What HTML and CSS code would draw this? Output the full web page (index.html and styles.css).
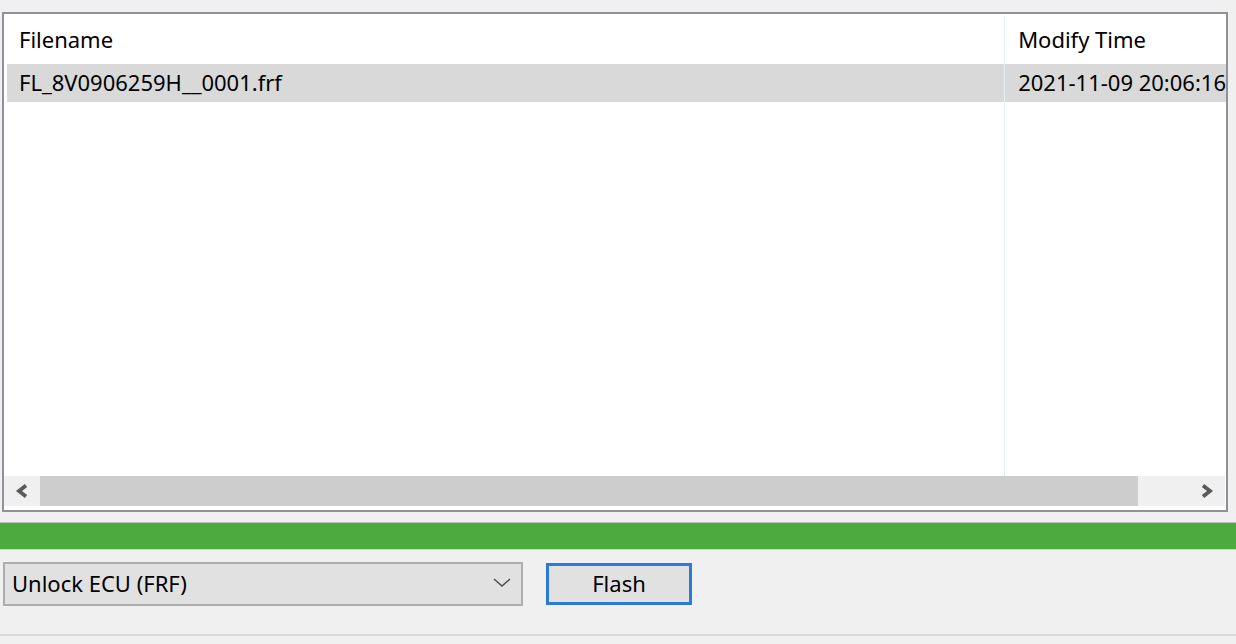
FILE: index.html
```html
<!DOCTYPE html>
<html>
<head>
<meta charset="utf-8">
<link rel="stylesheet" href="styles.css">
</head>
<body>
<div class="app">
  <div class="listview">
    <div class="lv-body">
      <div class="lv-cols">
        <div class="col col-name">
          <div class="hdr">Filename</div>
          <div class="cell sel">FL_8V0906259H__0001.frf</div>
        </div>
        <div class="col col-time">
          <div class="hdr">Modify Time</div>
          <div class="cell sel">2021-11-09 20:06:16</div>
        </div>
      </div>
      <div class="hscroll">
        <div class="arrow">
          <svg width="16" height="16" viewBox="0 0 16 16"><polyline points="12,2.5 5,8 12,13.5" fill="none" stroke="#5a5a5a" stroke-width="3.8"/></svg>
        </div>
        <div class="track"><div class="thumb"></div></div>
        <div class="arrow">
          <svg width="16" height="16" viewBox="0 0 16 16"><polyline points="4,2.5 11,8 4,13.5" fill="none" stroke="#5a5a5a" stroke-width="3.8"/></svg>
        </div>
      </div>
    </div>
  </div>
  <div class="progress"></div>
  <div class="controls">
    <div class="combo">
      <span>Unlock ECU (FRF)</span>
      <svg width="18" height="10" viewBox="0 0 18 10"><polyline points="1,1 9,8 17,1" fill="none" stroke="#505050" stroke-width="1.6"/></svg>
    </div>
    <div class="button">Flash</div>
  </div>
  <div class="bottomline"></div>
</div>
</body>
</html>
```

FILE: styles.css
```css
html, body {
  margin: 0;
  padding: 0;
  background: #f0f0f0;
  width: 1236px;
  height: 644px;
  overflow: hidden;
  font-family: "Noto Sans", "Open Sans", "DejaVu Sans", sans-serif;
  font-size: 22px;
  color: #000;
}
.app {
  display: flex;
  flex-direction: column;
  height: 644px;
}
.listview {
  margin: 12px 0 0 2px;
  width: 1226px;
  height: 500px;
  box-sizing: border-box;
  border: 2px solid #8f9196;
  background: #fff;
  padding: 2px 0 2px 0;
}
.lv-body {
  width: 1222px;
  height: 492px;
  display: flex;
  flex-direction: column;
  overflow: hidden;
}
.lv-cols {
  display: flex;
  height: 460px;
}
.col {
  display: flex;
  flex-direction: column;
}
.col-name {
  width: 1002px;
  border-right: 1px solid #e4edf6;
  box-sizing: border-box;
  padding-left: 3px;
}
.col-time {
  flex: 1;
}
.hdr {
  height: 48px;
  line-height: 47px;
  padding-left: 12px;
  white-space: nowrap;
}
.cell {
  height: 38px;
  line-height: 37px;
  padding-left: 12px;
  white-space: nowrap;
}
.sel {
  background: #d9d9d9;
}
.col-time .hdr, .col-time .cell {
  padding-left: 13px;
}
.hscroll {
  height: 30px;
  display: flex;
  background: #f0f0f0;
  width: 1221px;
}
.arrow {
  width: 36px;
  display: flex;
  align-items: center;
  justify-content: center;
}
.track {
  flex: 1;
  display: flex;
}
.thumb {
  width: 1098px;
  background: #cdcdcd;
}
.progress {
  margin-top: 10px;
  height: 26px;
  background: #4dab3d;
  border-top: 1px solid #bdbdbd;
  border-bottom: 1px solid #d4d4d4;
}
.controls {
  display: flex;
  align-items: flex-start;
  gap: 23px;
  margin-top: 12px;
  padding-left: 3px;
}
.combo {
  width: 520px;
  height: 44px;
  box-sizing: border-box;
  border: 2px solid #adadad;
  background: #e1e1e1;
  display: flex;
  align-items: center;
  justify-content: space-between;
  padding: 0 10px 2px 7px;
}
.combo span {
  white-space: nowrap;
}
.button {
  width: 146px;
  height: 42px;
  margin-top: 1px;
  box-sizing: border-box;
  border: 3px solid #2a7bd8;
  background: #e1e1e1;
  display: flex;
  align-items: center;
  justify-content: center;
  padding-bottom: 2px;
}
.bottomline {
  margin-top: 28px;
  height: 2px;
  background: #dadada;
}
```
